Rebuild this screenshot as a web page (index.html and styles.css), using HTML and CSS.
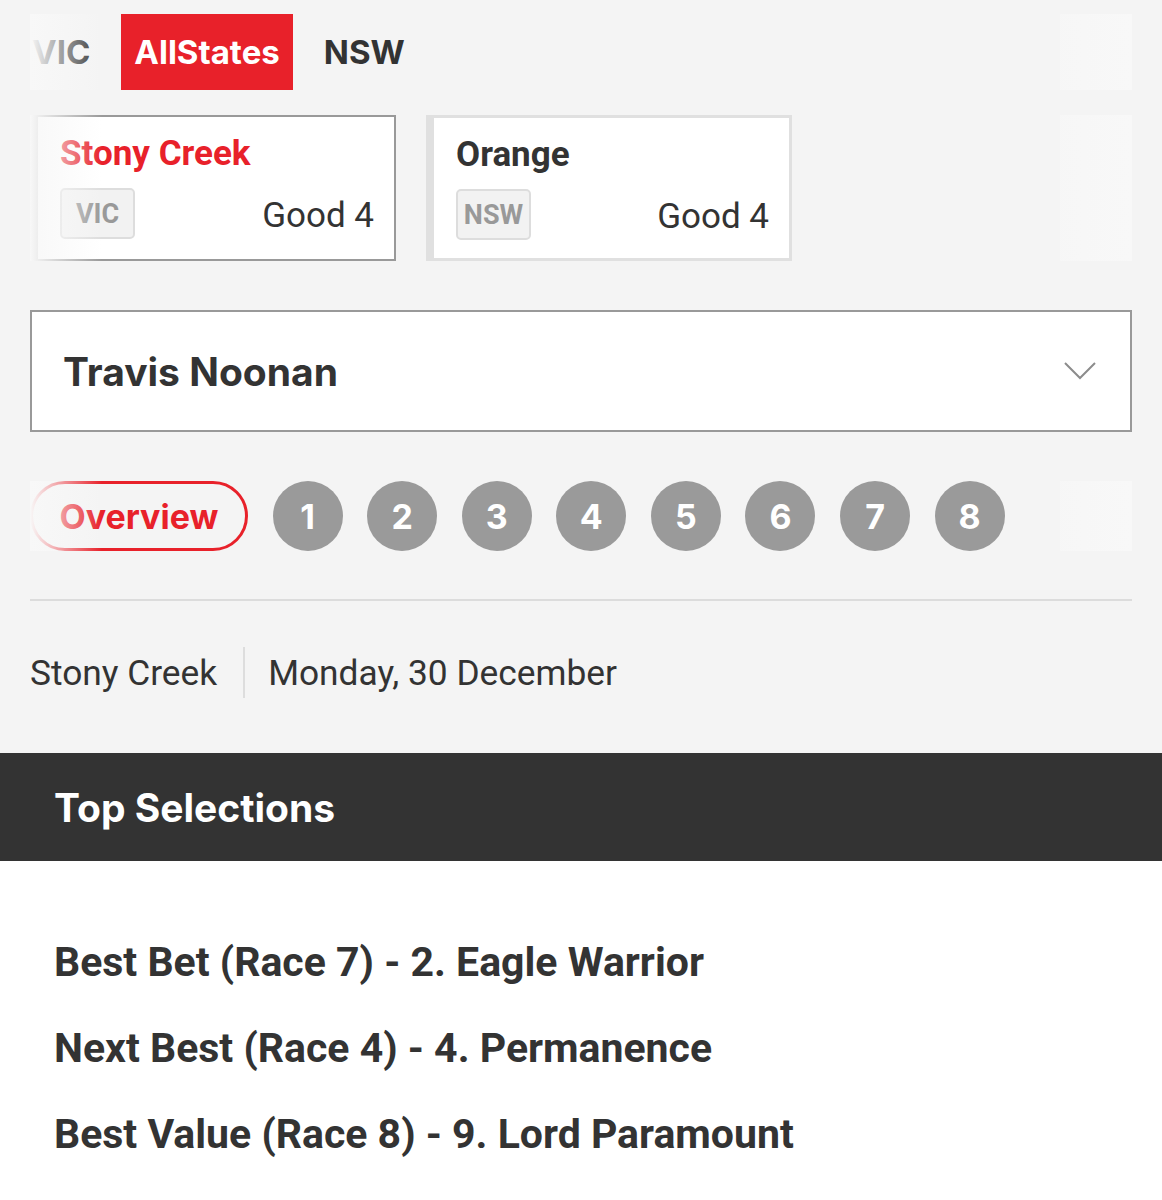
FILE: index.html
```html
<!DOCTYPE html>
<html>

<head>
    <title>Tips - Travis Noonan</title>
    <link rel="stylesheet" href="styles.css">
</head>

<body>
    <div class="top">
        <!-- state tabs -->
        <div class="scroller">
            <div class="tabs">
                <a class="tab">VIC</a>
                <a class="tab active">AllStates</a>
                <a class="tab">NSW</a>
            </div>
        </div>

        <!-- meetings -->
        <div class="scroller gap-cards">
            <div class="meetings">
                <div class="meeting selected">
                    <div class="meeting-name">Stony Creek</div>
                    <div class="meeting-row">
                        <span class="badge">VIC</span>
                        <span class="track">Good 4</span>
                    </div>
                </div>
                <div class="meeting">
                    <div class="meeting-name">Orange</div>
                    <div class="meeting-row">
                        <span class="badge">NSW</span>
                        <span class="track">Good 4</span>
                    </div>
                </div>
            </div>
        </div>

        <div class="select">
            <span>Travis Noonan</span>
            <svg class="chevron" width="32" height="18" viewBox="0 0 32 18">
                <polyline points="1,1 16,16 31,1" fill="none" stroke="#8c8c8c" stroke-width="2" />
            </svg>
        </div>

        <!-- races -->
        <div class="scroller gap-races">
            <div class="races">
                <a class="overview">Overview</a>
                <a class="race">1</a>
                <a class="race">2</a>
                <a class="race">3</a>
                <a class="race">4</a>
                <a class="race">5</a>
                <a class="race">6</a>
                <a class="race">7</a>
                <a class="race">8</a>
            </div>
        </div>

        <div class="divider"></div>

        <div class="info">
            <span>Stony Creek</span>
            <span class="sep"></span>
            <span>Monday, 30 December</span>
        </div>
    </div>

    <div class="section-head">Top Selections</div>

    <div class="selections">
        <p>Best Bet (Race 7) - 2. Eagle Warrior</p>
        <p>Next Best (Race 4) - 4. Permanence</p>
        <p>Best Value (Race 8) - 9. Lord Paramount</p>
    </div>
</body>

</html>
```

FILE: styles.css
```css
body {
    margin: 0;
    background: #f4f4f4;
    font-family: Roboto, "Liberation Sans", sans-serif;
    color: #333;
}

.top {
    padding: 14px 30px 55px;
}

/* horizontal scroll strips with faded edges */
.scroller {
    position: relative;
    overflow: hidden;
}

.scroller:before,
.scroller:after {
    content: "";
    position: absolute;
    top: 0;
    bottom: 0;
    width: 72px;
    pointer-events: none;
}

.scroller:before {
    left: 0;
    background: linear-gradient(to right, rgba(248, 248, 248, 1), rgba(248, 248, 248, 0));
}

.scroller:after {
    right: 0;
    background: linear-gradient(to right, rgba(249, 249, 249, 0.5), rgba(249, 249, 249, 0.8));
}

.tabs {
    display: flex;
    gap: 18px;
    height: 76px;
}

.tab {
    display: flex;
    align-items: center;
    padding: 0 13px;
    font-family: Inter, sans-serif;
    font-weight: 700;
    font-size: 33px;
    color: #333;
}

.tab:first-child {
    padding-left: 2px;
}

.tab.active {
    background: #e8212a;
    color: #fff;
}

.gap-cards {
    margin-top: 25px;
}

.meetings {
    display: flex;
    gap: 30px;
}

.meeting {
    width: 366px;
    height: 146px;
    box-sizing: border-box;
    background: #fff;
    border: 3px solid #e0e0e0;
    border-left-width: 8px;
    padding: 17px 20px 0 22px;
}

.meeting.selected {
    border: 2px solid #999;
    border-left-width: 8px;
}

.meeting-name {
    font-size: 35px;
    font-weight: 700;
    line-height: 40px;
}

.selected .meeting-name {
    color: #e8212a;
}

.meeting-row {
    display: flex;
    justify-content: space-between;
    align-items: center;
    margin-top: 14px;
}

.badge {
    width: 75px;
    height: 51px;
    box-sizing: border-box;
    display: flex;
    align-items: center;
    justify-content: center;
    background: #f2f2f2;
    border: 2px solid #ddd;
    border-radius: 5px;
    color: #999;
    font-size: 27px;
    font-weight: 700;
}

.track {
    font-size: 35px;
    padding-top: 4px;
}

.select {
    margin-top: 49px;
    height: 122px;
    box-sizing: border-box;
    background: #fff;
    border: 2px solid #999;
    display: flex;
    align-items: center;
    justify-content: space-between;
    padding: 0 34px 0 31px;
    font-family: Inter, sans-serif;
    font-weight: 700;
    font-size: 39px;
    color: #333;
}

.gap-races {
    margin-top: 49px;
}

.races {
    display: flex;
    gap: 24.6px;
}

.overview {
    height: 70px;
    box-sizing: border-box;
    padding: 0 26.5px;
    border: 3px solid #e8212a;
    border-radius: 35px;
    display: flex;
    align-items: center;
    font-family: Inter, sans-serif;
    font-weight: 700;
    font-size: 34px;
    color: #e8212a;
}

.race {
    width: 70px;
    height: 70px;
    flex: none;
    border-radius: 50%;
    background: #9a9a9a;
    color: #fff;
    display: flex;
    align-items: center;
    justify-content: center;
    font-family: Inter, sans-serif;
    font-weight: 700;
    font-size: 34px;
}

.divider {
    margin-top: 48px;
    height: 2px;
    background: #dcdcdc;
}

.info {
    margin-top: 46px;
    height: 51px;
    display: flex;
    align-items: center;
    font-size: 35.3px;
    color: #333;
}

.sep {
    width: 2px;
    align-self: stretch;
    background: #ddd;
    margin: 0 23px 0 26px;
}

.section-head {
    height: 108px;
    background: #333;
    color: #fff;
    display: flex;
    align-items: center;
    padding-left: 54px;
    font-family: Inter, sans-serif;
    font-weight: 700;
    font-size: 39px;
}

.selections {
    background: #fff;
    padding: 58px 54px 40px;
}

.selections p {
    margin: 0;
    font-size: 41px;
    font-weight: 700;
    line-height: 86px;
    color: #333;
}
```
